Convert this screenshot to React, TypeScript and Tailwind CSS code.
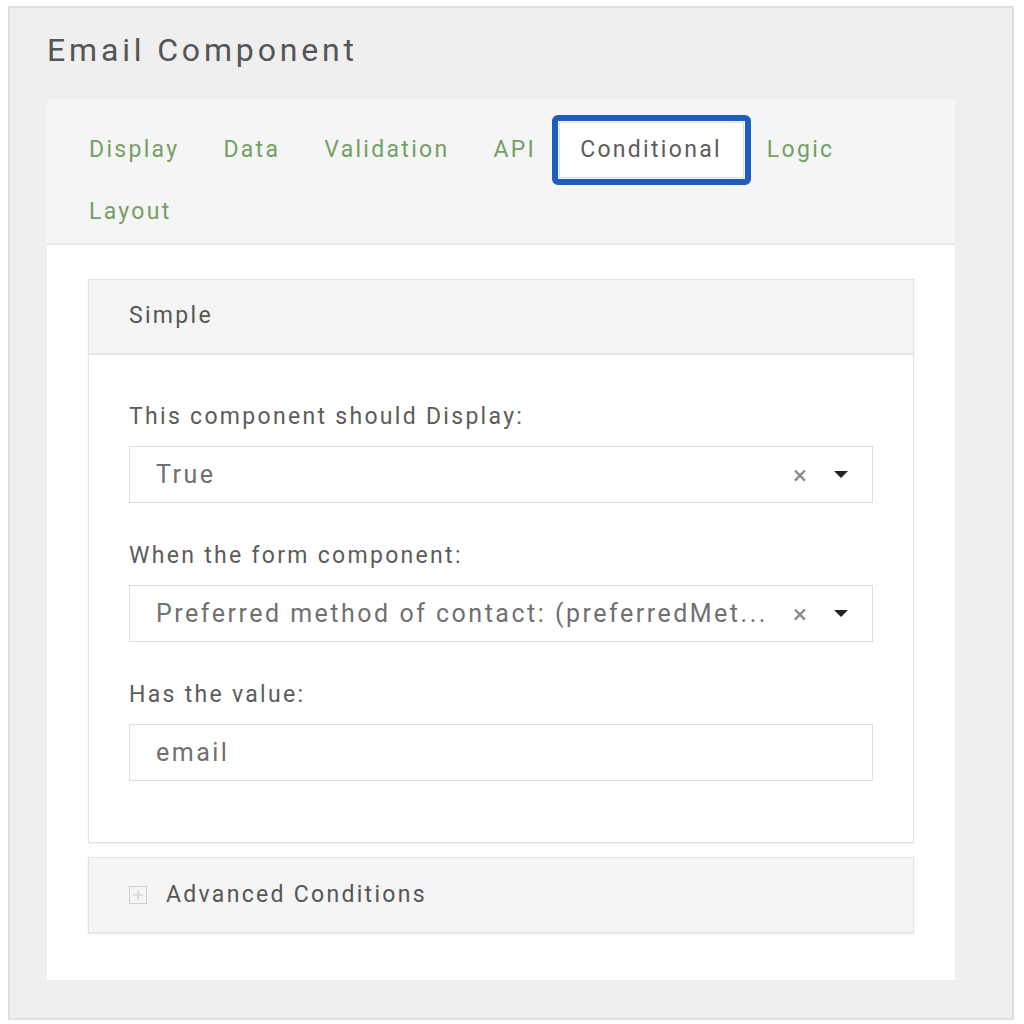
const tabs = ["Display", "Data", "Validation", "API", "Conditional", "Logic", "Layout"];

function Tab({ label }: { label: string }) {
  if (label === "Conditional") {
    return (
      <div className="flex h-[62px] items-center ml-[-6px] mr-[-6px]">
        <div className="h-[70px] rounded-[6px] border-[6px] border-[#1f5dbd] p-[1px]">
          <div className="flex h-full items-center border border-[#dcdcdc] bg-white pl-[20px] pr-[21px] text-[#5c5c5c]">
            {label}
          </div>
        </div>
      </div>
    );
  }
  return (
    <div className="flex h-[62px] items-center px-[22px] text-[#74a065]">{label}</div>
  );
}

function Select({ value }: { value: string }) {
  return (
    <div className="flex h-[57px] items-center border border-[#dedede] bg-white pl-[26px] pr-[24px]">
      <span className="min-w-0 flex-1 whitespace-nowrap text-[25px] tracking-[0.1em] text-[#707070]">{value}</span>
      <span className="ml-[2px] text-[26px] leading-none text-[#8a8a8a]">×</span>
      <svg width="14" height="8" viewBox="0 0 14 8" className="ml-[27px]">
        <path d="M0 0 H14 L7 7 Z" fill="#222" />
      </svg>
    </div>
  );
}

function Field({ label, children }: { label: string; children: React.ReactNode }) {
  return (
    <div className="flex flex-col">
      <div className="mb-[14px] text-[23px] leading-[30px] tracking-[0.1em] text-[#5c5c5c]">{label}</div>
      {children}
    </div>
  );
}

export default function App() {
  return (
    <div className="min-h-[1024px] bg-white p-[6px_8px_4px_8px] font-['Roboto','Liberation_Sans',sans-serif]">
      <div className="h-[1014px] w-[1006px] border-2 border-[#e0e0e0] bg-[#efefef] pl-[37px]">
        <h1 className="pt-[21px] pb-[28px] text-[32px] leading-[42px] tracking-[0.12em] text-[#555]">
          Email Component
        </h1>
        <div className="w-[908px] h-[881px] bg-white">
          <div className="flex flex-wrap border-b-2 border-[#e6e6e6] bg-[#f5f5f5] pt-[20px] pl-[20px] pr-[60px] h-[146px] text-[23px] tracking-[0.1em]">
            {tabs.map((t) => (
              <Tab key={t} label={t} />
            ))}
          </div>
          <div className="px-[41px] pt-[34px]">
            <div className="border border-[#e3e3e3] shadow-[0_1px_2px_rgba(0,0,0,0.08)]">
              <div className="flex h-[75px] items-center border-b-2 border-[#e6e6e6] bg-[#f5f5f5] pl-[40px] text-[23px] tracking-[0.1em] text-[#555]">
                Simple
              </div>
              <div className="flex flex-col gap-[38px] px-[40px] pt-[47px] pb-[61px]">
                <Field label="This component should Display:">
                  <Select value="True" />
                </Field>
                <Field label="When the form component:">
                  <Select value="Preferred method of contact: (preferredMet..." />
                </Field>
                <Field label="Has the value:">
                  <div className="flex h-[57px] items-center border border-[#dedede] bg-white pl-[26px] text-[25px] tracking-[0.1em] text-[#707070]">
                    email
                  </div>
                </Field>
              </div>
            </div>
            <div className="mt-[14px] flex h-[76px] items-center border border-[#e3e3e3] bg-[#f5f5f5] pl-[40px] shadow-[0_1px_2px_rgba(0,0,0,0.1)]">
              <svg width="18" height="18" viewBox="0 0 18 18" className="mr-[19px]">
                <rect x="0.5" y="0.5" width="17" height="17" fill="none" stroke="#cfcfcf" />
                <path d="M9 4 V14 M4 9 H14" stroke="#cfcfcf" strokeWidth="1.2" />
              </svg>
              <span className="text-[23px] tracking-[0.1em] text-[#555]">Advanced Conditions</span>
            </div>
          </div>
        </div>
      </div>
    </div>
  );
}
